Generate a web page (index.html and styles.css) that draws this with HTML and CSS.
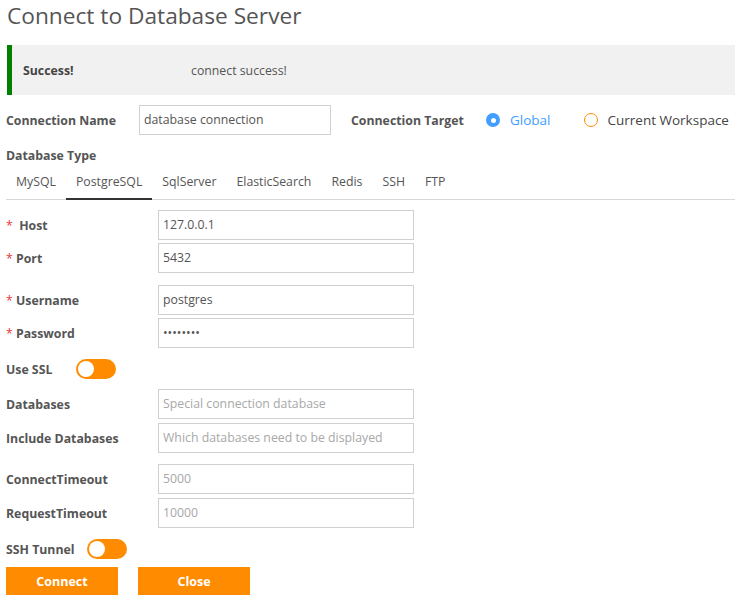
FILE: index.html
```html
<!DOCTYPE html>
<html>
<head>
<meta charset="utf-8">
<link rel="stylesheet" href="styles.css">
</head>
<body>
<div class="page">
  <h1 class="title">Connect to Database Server</h1>
  <div class="alert">
    <span class="alert-title">Success!</span>
    <span class="alert-msg">connect success!</span>
  </div>

  <div class="row-top">
    <span class="lbl lbl-name">Connection Name</span>
    <div class="input name-input">database connection</div>
    <span class="lbl lbl-target">Connection Target</span>
    <span class="radio radio-on"><span class="dot"></span></span>
    <span class="radio-text on">Global</span>
    <span class="radio radio-off"></span>
    <span class="radio-text">Current Workspace</span>
  </div>

  <div class="lbl db-type">Database Type</div>
  <div class="tabs">
    <span class="tab">MySQL</span>
    <span class="tab active">PostgreSQL</span>
    <span class="tab">SqlServer</span>
    <span class="tab">ElasticSearch</span>
    <span class="tab">Redis</span>
    <span class="tab">SSH</span>
    <span class="tab">FTP</span>
  </div>

  <div class="form">
    <div class="item r-host"><span class="lbl fl"><span class="req">*</span>&nbsp; Host</span><div class="input">127.0.0.1</div></div>
    <div class="item r-port"><span class="lbl fl"><span class="req">*</span> Port</span><div class="input">5432</div></div>
    <div class="item r-user"><span class="lbl fl"><span class="req">*</span> Username</span><div class="input">postgres</div></div>
    <div class="item r-pass"><span class="lbl fl"><span class="req">*</span> Password</span><div class="input pw">&bull;&bull;&bull;&bull;&bull;&bull;&bull;&bull;</div></div>
    <div class="switch-row r-ssl"><span class="lbl">Use SSL</span><span class="switch"><span class="knob"></span></span></div>
    <div class="item r-dbs"><span class="lbl fl">Databases</span><div class="input ph">Special connection database</div></div>
    <div class="item r-inc"><span class="lbl fl">Include Databases</span><div class="input ph">Which databases need to be displayed</div></div>
    <div class="item r-ct"><span class="lbl fl">ConnectTimeout</span><div class="input ph">5000</div></div>
    <div class="item r-rt"><span class="lbl fl">RequestTimeout</span><div class="input ph">10000</div></div>
    <div class="switch-row r-ssh"><span class="lbl">SSH Tunnel</span><span class="switch"><span class="knob"></span></span></div>
    <div class="buttons">
      <button class="btn">Connect</button>
      <button class="btn">Close</button>
    </div>
  </div>
</div>
</body>
</html>
```

FILE: styles.css
```css
* { box-sizing: border-box; }
html, body { margin: 0; padding: 0; background: #fff; }
body {
  font-family: "Open Sans", "Noto Sans", sans-serif;
  color: #555;
  font-size: 12.3px;
  width: 735px;
  overflow: hidden;
}
.page { padding: 0 0 0 6px; }
.title {
  margin: 0;
  padding: 1px 0 0 1px;
  font-size: 22.7px;
  font-weight: 400;
  line-height: 29px;
  color: #555;
}
.alert {
  margin-top: 15px;
  margin-left: 1px;
  height: 50px;
  background: #f1f1f1;
  border-left: 5px solid #008000;
  display: flex;
  align-items: center;
}
.alert-title { font-weight: 700; padding-left: 11px; width: 179px; color: #444; }
.alert-msg { color: #555; }

.lbl { font-weight: 700; color: #555; font-size: 12.3px; }

.row-top {
  display: flex;
  align-items: center;
  margin-top: 10px;
  height: 30px;
}
.lbl-name { width: 133px; }
.input {
  border: 1px solid #d0d0d0;
  height: 30px;
  line-height: 28px;
  padding: 0 4px;
  font-size: 12.3px;
  color: #555;
  width: 256px;
}
.name-input { width: 192px; }
.lbl-target { margin-left: 20px; width: 135px; }
.radio {
  width: 14px; height: 14px; border-radius: 50%;
  display: inline-flex; align-items: center; justify-content: center;
  flex: none;
}
.radio-on { background: #409eff; }
.radio-on .dot { width: 5px; height: 5px; border-radius: 50%; background: #fff; }
.radio-off { border: 1px solid #ff8c00; margin-left: 33px; }
.radio-text { margin-left: 10px; font-size: 13.5px; color: #444; }
.radio-text.on { color: #409eff; }

.db-type { margin-top: 11px; line-height: 20px; }
.tabs {
  display: flex;
  height: 31px;
  border-bottom: 1px solid #d8d8d8;
  margin-top: 3px;
}
.tab {
  padding: 0 10px;
  line-height: 25px;
  color: #555;
  border-bottom: 2px solid transparent;
  height: 31px;
}
.tab.active { border-bottom-color: #333; }

.form { margin-top: 10px; }
.item { display: flex; align-items: center; }
.fl { width: 152px; flex: none; }
.req { color: #e53935; font-weight: 400; }
.r-port { margin-top: 3px; }
.r-user { margin-top: 12px; }
.r-pass { margin-top: 3px; }
.ph { color: #a8a8a8; }
.switch-row { display: flex; align-items: center; height: 20px; }
.r-ssl { margin-top: 11px; }
.r-ssl .switch { margin-left: 24px; }
.r-dbs { margin-top: 10px; }
.r-inc { margin-top: 4px; }
.r-ct { margin-top: 11px; }
.r-rt { margin-top: 4px; }
.r-ssh { margin-top: 11px; }
.r-ssh .switch { margin-left: 12px; }
.switch {
  width: 40px; height: 20px; border-radius: 10px;
  background: #ff8c00; position: relative; display: inline-block;
  flex: none;
}
.knob {
  position: absolute; left: 2px; top: 2px;
  width: 16px; height: 16px; border-radius: 50%; background: #fff;
}
.buttons { display: flex; gap: 20px; margin-top: 8px; }
.btn {
  width: 112px; height: 28px;
  background: #ff8c00; border: none; color: #fff;
  font-family: inherit; font-weight: 700; font-size: 12.5px;
  padding: 0; margin: 0;
}
```
